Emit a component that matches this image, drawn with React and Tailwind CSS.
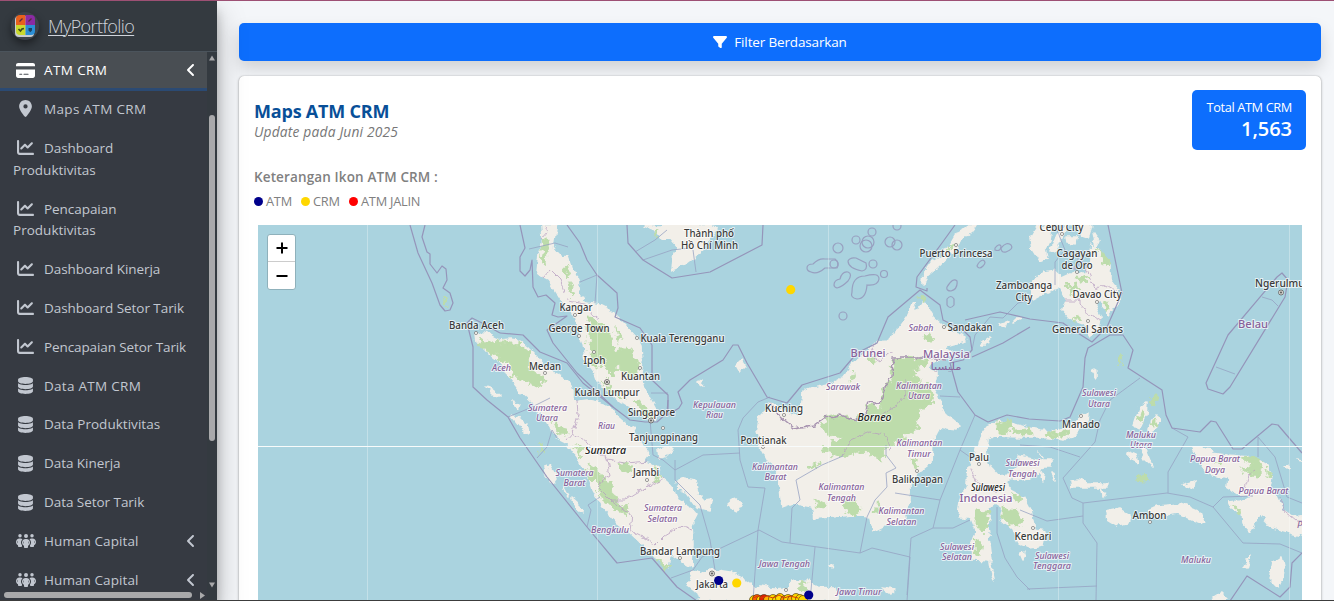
import React from "react";
import {
  FaFilter,
  FaCreditCard,
  FaLocationDot,
  FaChartLine,
  FaDatabase,
  FaPeopleGroup,
  FaAngleLeft,
} from "react-icons/fa6";

const menu = [
  { icon: FaLocationDot, label: "Maps ATM CRM", track: "tracking-[0.33px]" },
  { icon: FaChartLine, label: "Dashboard", more: "Produktivitas" },
  { icon: FaChartLine, label: "Pencapaian", more: "Produktivitas" },
  { icon: FaChartLine, label: "Dashboard Kinerja" },
  { icon: FaChartLine, label: "Dashboard Setor Tarik" },
  { icon: FaChartLine, label: "Pencapaian Setor Tarik", track: "tracking-[-0.1px]" },
  { icon: FaDatabase, label: "Data ATM CRM", track: "tracking-[0.28px]" },
  { icon: FaDatabase, label: "Data Produktivitas", track: "tracking-[0.03px]" },
  { icon: FaDatabase, label: "Data Kinerja" },
  { icon: FaDatabase, label: "Data Setor Tarik" },
  { icon: FaPeopleGroup, label: "Human Capital", arrow: true, track: "tracking-[0.08px]" },
  { icon: FaPeopleGroup, label: "Human Capital", arrow: true, track: "tracking-[0.08px]" },
];

function Logo() {
  return (
    <div className="flex h-7 w-7 items-center justify-center rounded-full bg-[#3d434a] shadow-[0_4px_8px_rgba(0,0,0,0.45)]">
      <svg width="20" height="22" viewBox="0 0 20 22">
        <rect x="0" y="1" width="19" height="21" rx="4" fill="#c9cdd0" />
        <path d="M5 0h5.500v10H1V4a4 4 0 0 1 4-4z" fill="#e8601c" />
        <path d="M10.500 0H16a4 4 0 0 1 4 4v6h-9.500z" fill="#8b2aa3" />
        <path d="M1 10h9.500v10H5a4 4 0 0 1-4-4z" fill="#c9d92e" />
        <path d="M10.500 10H20v6a4 4 0 0 1-4 4h-5.500z" fill="#2b8fd6" />
        <path d="M4.500 6.500l3-3M13.500 6.500l3-3" stroke="#5a2a3a" strokeWidth="1.300" />
        <path d="M3.500 14l2 2 1.500-2 2-.5" stroke="#3c4a1c" strokeWidth="1.600" fill="none" />
        <path d="M13.500 13h3.500v2.500l-1.700 1.800-1.800-1.800z" fill="#1d4260" />
      </svg>
    </div>
  );
}

function Sidebar() {
  return (
    <aside className="relative z-10 flex h-full w-[217px] shrink-0 flex-col overflow-visible bg-[#343a40] text-[#c2c7d0] shadow-[0_14px_28px_rgba(0,0,0,0.25),0_10px_10px_rgba(0,0,0,0.22)]">
      <div className="flex h-[51px] shrink-0 items-center gap-[9px] border-b border-[#4b545c] pl-[11px]">
        <Logo />
        <span className="pt-px text-[18px] font-light tracking-[-0.58px] text-[#d0d4db] underline decoration-1 underline-offset-2">MyPortfolio</span>
      </div>
      <div className="flex min-h-0 flex-1">
        <nav className="w-[207px] overflow-hidden bg-[#363a42] text-[13.500px] tracking-[-0.05px]">
          <div className="flex h-[39px] items-center border-b-[3px] border-[#2b4a73] bg-[#494e53] text-white">
            <FaCreditCard className="ml-4 h-[19px] w-[19px]" />
            <span className="ml-[9px] font-medium tracking-[0.38px]">ATM CRM</span>
            <FaAngleLeft className="ml-auto mr-[8px] h-4 w-4" />
          </div>
          <ul className="whitespace-nowrap">
            {menu.map((m, i) => (
              <li key={i} className="pb-[9.140px] pl-[13px] pt-[8.170px] leading-[21.600px]">
                <div className="flex h-[21.600px] items-center">
                  <span className="flex w-[25px] justify-center">
                    <m.icon className={m.icon === FaPeopleGroup ? "-mt-[2px] h-5 w-5" : "-mt-[2px] h-[17px] w-[17px]"} />
                  </span>
                  <span className={`ml-[6px] ${m.track || ""}`}>{m.label}</span>
                  {m.arrow && <FaAngleLeft className="-mt-[2px] ml-auto mr-[8px] h-4 w-4" />}
                </div>
                {m.more && <div className="h-[21.600px] tracking-[0.02px]">{m.more}</div>}
              </li>
            ))}
          </ul>
        </nav>
        <div className="flex w-[10px] flex-col items-center bg-[#343a40] pt-[3px]">
          <svg width="6" height="6" viewBox="0 0 6 6"><path d="M0 5.500L3 .5l3 5z" fill="#a9a9ab" /></svg>
          <div className="mt-[54px] h-[326px] w-[6px] rounded-full bg-[#a9a9ab]" />
          <svg className="mt-[141px]" width="6" height="6" viewBox="0 0 6 6"><path d="M0 .5L3 5.500l3-5z" fill="#a9a9ab" /></svg>
        </div>
      </div>
      <div className="absolute bottom-0 left-0 flex h-[10px] w-[217px] items-center pl-1">
        <div className="h-[6px] w-[188px] rounded-full bg-[#a9a9ab]" />
        <svg className="ml-[8px]" width="5" height="7" viewBox="0 0 5 7"><path d="M0 0l5 3.500L0 7z" fill="#a9a9ab" /></svg>
      </div>
    </aside>
  );
}

const land = [
  // Malay peninsula
  "541,225 542,240 539,253 537,273 542,277 548,280 553,287 558,295 563,303 568,310 575,317 578,330 583,343 585,360 593,370 597,380 610,393 622,402 640,413 650,420 658,418 657,410 650,397 643,387 641,374 643,360 642,347 637,338 623,323 610,310 600,305 585,303 580,293 578,280 572,267 568,256 562,257 558,253 553,247 555,233 557,225",
  // Sumatra
  "476,334 484,332 500,340 510,339 517,340 528,348 537,357 550,372 562,377 570,383 573,392 573,402 587,400 597,402 605,404 610,407 613,413 620,418 626,423 634,428 637,436 643,444 648,455 643,462 652,464 659,468 661,477 668,482 673,488 678,500 690,507 697,515 692,525 693,543 692,567 683,562 670,553 668,568 657,558 643,545 630,533 617,523 603,507 593,490 587,473 577,457 567,443 557,438 550,427 540,412 533,403 520,391 510,378 502,363 485,350 477,341",
  // Borneo
  "913,304 916,312 920,305 923,302 927,307 933,317 940,323 947,330 957,333 966,337 965,342 953,345 943,348 952,354 948,359 932,362 927,369 937,372 937,380 932,387 937,395 942,410 950,418 960,426 957,430 948,429 940,427 933,440 932,463 920,472 910,483 910,500 905,513 907,523 887,525 873,532 871,517 853,515 833,517 815,518 812,507 793,503 782,507 780,487 777,467 767,460 760,447 757,430 760,417 765,410 770,402 776,405 785,413 798,417 802,402 803,392 813,388 827,385 843,377 853,363 867,353 875,343 888,342 892,333 900,327 907,317",
  // Java
  "688,585 693,570 701,574 710,570 730,573 740,577 748,582 753,587 760,586 774,588 788,587 792,580 799,581 807,580 812,586 835,587 838,601 700,601 697,592",
  // Sulawesi
  "980,437 987,427 1000,421 1010,423 1029,428 1040,430 1057,431 1070,427 1080,415 1088,413 1087,423 1077,433 1063,440 1040,437 1020,437 993,436 987,441 986,450 990,467 997,475 1010,474 1020,464 1020,455 1040,460 1052,460 1052,467 1043,467 1037,475 1020,480 1006,481 1010,490 1023,497 1030,510 1034,530 1045,532 1043,546 1030,548 1018,543 1012,530 1000,520 1003,508 995,503 990,507 988,527 992,561 973,560 972,543 975,530 970,518 958,518 960,500 967,483 968,467 975,457",
  // Halmahera
  "1134,425 1140,407 1147,402 1146,416 1140,428",
  "1150,425 1156,415 1160,420 1155,429 1149,433 1148,429",
  "1139,446 1146,450 1153,467 1145,460",
  "1128,452 1136,455 1139,463 1128,458",
  // Sula, Buru, Seram
  "1071,481 1078,480 1087,483 1108,483 1107,487 1072,487",
  "1102,488 1106,495 1103,497",
  "1106,512 1120,509 1130,515 1128,523 1117,525 1107,519",
  "1148,510 1157,506 1180,504 1191,508 1200,512 1204,524 1193,520 1177,513 1160,516 1151,514",
  // Papua
  "1193,448 1213,450 1210,453 1227,455 1253,457 1267,465 1272,477 1270,487 1277,497 1283,510 1293,517 1306,515 1306,537 1287,532 1270,527 1260,513 1257,520 1250,531 1243,523 1242,513 1230,507 1228,502 1240,501 1253,497 1237,493 1227,487 1228,479 1207,473 1202,465",
  "1182,485 1195,481 1194,488",
  "1270,580 1273,563 1282,557 1284,567 1283,577 1278,588",
  "1244,566 1251,555 1247,568",
  "1214,597 1222,592 1227,597 1223,601 1212,601",
  // Mindanao and neighbours
  "1092,245 1102,253 1110,265 1110,280 1118,290 1118,302 1108,315 1102,300 1093,303 1100,317 1098,330 1090,335 1083,323 1070,318 1063,310 1067,300 1060,287 1047,292 1032,300 1033,283 1043,272 1055,270 1062,278 1073,273 1087,273 1090,260",
  "1030,238 1037,226 1052,225 1050,240 1045,250 1047,258 1040,261 1032,248",
  "1050,252 1057,235 1066,226 1063,236 1055,250",
  "1066,237 1077,237 1075,244 1067,243",
  "1079,225 1092,225 1088,238 1082,236",
  "1093,232 1099,240 1096,247",
  "923,284 924,272 931,262 940,257 950,245 957,233 970,225 977,225 973,231 963,238 953,253 937,268 928,275",
  // Mekong delta
  "643,225 712,225 716,230 708,241 700,253 687,263 672,270 673,258 677,247 670,238 661,239 655,230",
  // Small islands
  "512,417 520,418 527,425 529,434 520,427",
  "544,467 549,465 556,478 552,483 546,476",
  "563,487 568,496",
  "571,497 578,503 582,513 576,509",
  "486,388 492,390 500,396 493,395",
  "513,401 520,404 518,409",
  "677,480 685,478 695,480 698,494 704,500 711,499 709,510 697,507 686,492 679,490",
  "727,503 733,498 742,504 737,512 731,509",
  "658,450 672,446 666,458 659,459",
  "736,365 741,360 745,367 740,372",
  "698,383 703,380 702,386",
  "990,562 992,575 994,580",
  "1020,553 1025,552 1023,560",
  "1092,370 1097,373 1097,377",
  "1039,452 1044,458",
  "1040,471 1045,473 1044,480",
  "1050,472 1054,474 1055,481",
  "882,588 895,590 890,594",
  "1000,324 1008,321 1006,327",
  "1013,322 1017,318 1022,318",
  "980,345 990,338 987,345",
  "1284,466 1288,464 1288,470",
  "1297,460 1302,461",
  "830,565 833,565 832,567",
];

const green = [
  "893,358 907,357 927,360 928,366 913,370 915,377 930,387 934,395 930,404 920,413 917,430 905,437 897,443 884,448 883,463 870,453 855,452 843,458 820,450 843,438 828,434 820,427 827,418 840,416 857,420 865,413 868,403 880,407 885,387 892,377",
  "478,337 490,343 503,342 520,344 530,353 527,362 535,372 546,378 538,388 525,382 515,377 508,364 495,354 483,349",
  "588,463 597,468 601,480 612,482 613,497 625,506 628,514 613,508 603,500 598,486 590,478",
  "543,238 549,242 547,262 541,266",
  "566,262 571,275 568,278 564,268",
  "568,282 575,293 572,298",
  "588,315 598,320 612,332 610,342 618,353 607,357 600,368 590,360 588,340",
  "607,352 630,348 638,360 640,372 628,376 617,366 613,378 605,370",
  "633,400 645,405 655,417 646,416",
  "600,380 615,390 624,398 617,398",
  "615,325 622,340 617,344",
  "620,462 631,466 633,473 622,469",
  "551,420 565,428 566,436 556,430",
  "574,445 583,450 580,456",
  "655,467 663,478 655,483",
  "998,422 1009,420 1012,427 1008,433 998,432",
  "1013,429 1030,428 1033,435 1014,433",
  "1047,433 1072,430 1062,438 1052,439",
  "1002,508 1016,510 1024,522 1016,526 1002,518",
  "1012,492 1022,497 1021,505 1014,500",
  "975,511 988,510 988,526 982,533 975,524",
  "975,540 982,543 980,556 975,553",
  "1241,460 1252,456 1262,463 1260,476 1244,474 1242,468 1253,465",
  "1264,467 1273,475 1270,477",
  "1217,463 1222,462 1220,467",
  "1134,477 1142,474 1150,480 1143,481 1134,480",
  "1150,401 1152,394 1159,394 1159,401 1154,405",
  "1136,420 1140,412 1145,410 1142,423",
  "1150,424 1157,418 1157,426",
  "842,503 855,500 861,508 856,515 845,512",
  "815,500 827,503 826,508 817,507",
  "808,467 818,462 816,471",
  "872,510 880,503 878,517",
  "853,373 857,376 850,381",
  "868,358 878,357 874,364",
  "925,332 934,337 928,341 923,338",
  "1098,248 1107,258 1110,267 1104,264",
  "1067,285 1076,283 1078,290 1070,292",
  "1078,277 1090,279 1083,284",
  "1073,316 1083,320 1078,323",
  "1105,305 1110,303 1108,312",
  "949,248 955,243 950,251",
  "655,230 660,229 657,239",
  "1118,358 1121,353 1122,360 1120,366",
  "443,300 447,297 448,305",
  "1231,505 1240,510 1236,511",
  "795,585 808,583 804,590",
  "658,560 668,566 666,569",
  "919,297 926,299 922,301",
  "540,444 543,450 539,456",
  "912,460 917,462 916,470",
];

const borders = [
  "410,225 418,253 432,283 440,305 445,311 450,310 453,303 450,293 443,288 447,280 446,269 442,266 437,273 430,264 430,254 427,252 422,237 425,225",
  "500,333 482,323 472,318 467,323 473,347 473,387 487,400 508,417 520,438 547,477 587,527 617,563 652,558 677,587 697,601",
  "500,333 523,335 540,352 567,363 583,383 613,407 630,420 645,422 657,422 667,413 668,400",
  "520,225 525,248 520,257 520,271 525,276 530,270 532,260 533,287 538,297 546,295 555,303 552,315 558,317 567,316 547,330 553,343 577,373 613,407",
  "567,225 580,243 587,260 597,275 617,293 618,308 615,317 640,328 652,345 652,380 668,395 668,415 679,408 682,403 678,392 690,380 723,360 733,345 738,345 747,363 767,397 787,403 802,385 840,373 857,353 877,343 888,317 920,290 940,305 943,320 963,330 970,337 972,350 963,360 950,363 958,392 975,415 988,422 1007,415 1029,419 1060,421 1070,417 1083,387 1085,358 1088,348 1110,335 1123,335 1133,350 1128,368 1162,390 1166,415 1172,428 1200,432 1211,421 1216,422 1233,449 1242,449 1272,424 1278,425 1302,453",
  "627,225 628,243 643,260 672,278 710,272 762,245 763,225",
  "955,225 942,243 917,277 916,287 927,291 927,288",
  "972,357 1003,343 1030,327",
  "965,320 1000,312 1030,319 1063,323 1073,330 1092,342 1107,327 1122,293 1108,225",
  "1277,277 1282,273 1288,280 1285,297 1230,387 1223,394 1208,389 1206,383 1228,335 1277,277",
  "1302,553 1292,563 1290,587 1280,597 1247,576 1230,601",
];

const thinBorders = [
  "508,417 530,408 550,398",
  "537,458 547,447 552,430 557,438",
  "587,527 591,510 588,505 600,497",
  "650,420 653,455 663,460 675,470 703,455 740,453",
  "675,460 675,480 700,505 710,540 715,570",
  "671,578 693,570 702,557 759,530 782,542 860,553 872,548 910,557 907,601",
  "907,595 911,538 933,528 940,500 960,450 975,415",
  "895,493 940,500",
  "933,528 953,528 970,520",
  "860,553 867,517 875,500 887,487 886,473 896,468 886,455 886,445",
  "790,543 792,508 800,500 796,480 822,465 843,456",
  "770,397 758,402 743,418 738,430 740,460 748,487 765,488 758,530 753,601",
  "815,547 810,601",
  "997,507 997,533 1005,558 1017,577 1030,590",
  "1140,378 1110,400 1100,420 1095,442 1063,478 1072,498 1083,503 1083,523 1097,543 1096,601",
  "1083,503 1167,493 1190,497 1213,507 1243,543 1280,544 1302,553",
  "1168,493 1168,472 1188,437 1172,428",
  "1258,437 1275,457 1287,497 1302,503",
  "1258,437 1258,457",
  "1213,507 1223,497 1253,496",
  "1027,589 1097,586",
  "1020,510 1047,521 1083,516",
  "960,450 970,457 978,457",
  "1020,445 1050,447 1080,457",
  "635,252 655,240 667,230",
  "643,260 672,250 690,248",
  "693,250 696,272",
  "597,275 580,282",
  "597,275 595,303",
  "529,249 555,243 568,247",
  "1262,297 1272,300 1278,306",
  "1216,367 1235,374",
  "972,350 975,335 990,317 1003,318 1018,303 1030,300",
  "1055,225 1065,250 1055,262 1055,285",
  "960,397 940,396",
  "651,393 668,393",
];

const provinces = [
  "577,400 578,415 573,433 567,440",
  "573,433 590,445 607,460 625,463 648,461",
  "607,460 610,475 602,480 597,487 610,500 625,500 636,493 655,483 665,478",
  "610,500 632,515 630,530 640,535 655,545 665,535 680,526 692,530",
  "843,456 850,440 870,432 885,435 890,450",
  "880,415 895,407 905,395 905,380",
  "970,467 978,483 990,490 1003,490",
  "543,278 550,270 560,280 565,292",
  "567,300 585,303 592,315 600,320",
  "1075,270 1080,258 1090,275 1095,290 1105,285 1118,292",
  "1066,300 1080,300 1085,312 1100,320",
  "1245,488 1248,475 1255,470",
  "1280,498 1285,512 1295,520 1302,520",
  "875,343 870,355 880,362 888,353 893,352",
  "541,240 548,232 545,225",
];

const reefs = [
  [838, 248, 5], [856, 240, 4], [868, 242, 6], [866, 246, 6], [897, 226, 4], [890, 242, 5], [897, 245, 5], [873, 264, 4],
  [884, 274, 3.500], [843, 316, 4], [872, 232, 4], [834, 264, 4],
];
const reefShapes = [
  "M807 268q0-4 6-4q6-6 12-5h10q5 4 2 9q-8 0-12 0q-8 7-14 4q-4-1-4-4z",
  "M848 261q2-4 8-3l10 5q2 7-4 8q-14-3-14-10z",
  "M834 285q0-5 6-6q2-8 8-7q5 2 0 9q-6 6-11 7q-3-1-3-3z",
  "M852 292q0-16 13-16q14-4 14 3q-1 7-12 6q-1 14-10 14q-7-1-5-7z",
  "M995 248q4-5 6-2q0 6-6 4zM947 287q6-10 10-6q1 8-6 10q-5 0-4-4z",
  "M977 266q2-5 6-6q4 2 0 6q-4 4-6 0z",
  "M947 299q4-5 7 0v6q-4 5-7 0zM1001 248q6-7 10-3q3 4-5 7q-5 1-5-4z",
];

// text, centre x, baseline y, drawn width
const cities = [
  ["Thành phố", 709, 236.500, 50], ["Hồ Chí Minh", 709.500, 248.500, 57],
  ["Kangar", 576, 311, 33], ["George Town", 579, 332, 61], ["Kuala Terengganu", 682.500, 341.500, 84],
  ["Banda Aceh", 476.500, 329, 55], ["Medan", 545, 370, 32], ["Ipoh", 594.500, 363.500, 22],
  ["Kuantan", 640.500, 380, 39], ["Kuala Lumpur", 607, 395.500, 65], ["Singapore", 651.500, 415.500, 47],
  ["Tanjungpinang", 663.500, 441, 69], ["Jambi", 646, 476, 26], ["Bandar Lampung", 680, 555, 80],
  ["Jakarta", 712, 588, 32], ["Kuching", 784, 411.500, 38], ["Pontianak", 763.500, 444, 46],
  ["Balikpapan", 917.500, 483, 51], ["Palu", 979, 461, 20], ["Puerto Princesa", 956, 256.500, 73],
  ["Sandakan", 970, 331, 45], ["Zamboanga", 1024, 289, 56], ["City", 1024, 301, 17],
  ["Cebu City", 1061.500, 231, 44], ["Cagayan", 1077, 256.500, 41], ["de Oro", 1077, 268.500, 31],
  ["Davao City", 1097, 298, 49], ["General Santos", 1087.500, 332.500, 71],
  ["Manado", 1081, 428, 38], ["Kendari", 1033, 539.500, 37], ["Ambon", 1149.500, 518.500, 34],
];

const regions = [
  ["Aceh", 501.500, 371, 19], ["Sumatera", 547.500, 410.500, 39], ["Utara", 547, 421, 22],
  ["Riau", 606.500, 429, 17], ["Kepulauan", 714.500, 407.500, 43], ["Riau", 714.500, 418, 17],
  ["Sumatera", 574.500, 475.500, 38], ["Barat", 574.500, 486, 22], ["Sumatera", 663, 511, 38],
  ["Selatan", 662.500, 521.500, 30], ["Bengkulu", 610, 532.500, 38], ["Sarawak", 843, 389.500, 34],
  ["Sabah", 921, 331, 25], ["Kalimantan", 919, 388.500, 46], ["Utara", 919, 399, 22],
  ["Kalimantan", 919.500, 446, 46], ["Timur", 919, 456.500, 24], ["Kalimantan", 775, 469.500, 46],
  ["Barat", 775.500, 480, 22], ["Kalimantan", 841.500, 490, 46], ["Tengah", 841.500, 500.500, 29],
  ["Kalimantan", 901.500, 514, 46], ["Selatan", 901.500, 524.500, 30], ["Jawa Tengah", 784.500, 567, 51],
  ["Jawa Timur", 859, 594.500, 45], ["Sulawesi", 957, 549.500, 34], ["Selatan", 957, 560, 30],
  ["Sulawesi", 1022.500, 466, 34], ["Tengah", 1022.500, 476.500, 29], ["Sulawesi", 1099, 396, 34],
  ["Utara", 1099, 406.500, 22], ["Sulawesi", 1052, 558.500, 34], ["Tenggara", 1052, 569, 38],
  ["Maluku", 1141, 437.500, 30], ["Utara", 1141, 448, 22], ["Papua Barat", 1215, 462, 50],
  ["Daya", 1215, 473, 20], ["Papua Barat", 1263.500, 494, 50], ["Maluku", 1196, 562.500, 30],
];

const countries = [
  ["Brunei", 868, 356.500, 35], ["Malaysia", 946.500, 357.500, 47], ["Indonesia", 986, 502, 53], ["Belau", 1253, 327.500, 30],
];

const towns = [
  [476, 333], [575, 315], [579, 336], [594, 352], [637, 338], [640, 368], [545, 373], [663, 428], [647, 480],
  [680, 558], [784, 415], [763, 447], [917, 471], [979, 464], [956, 245], [944, 327], [1062, 234], [1077, 272],
  [1097, 302], [1088, 321], [1081, 416], [1150, 522], [1033, 528], [786, 590],
];

const cluster = [
  [754, 600, "#ffd700"], [757, 599, "#ff5a00"], [761, 600, "#ffd700"], [764, 599, "#e02000"], [768, 600, "#ffb000"],
  [773, 599, "#ffd700"], [777, 600, "#ffd700"], [780, 598, "#ffd700"], [785, 600, "#ff8c00"], [788, 599, "#ffd700"],
  [792, 600, "#ffb000"], [796, 598, "#ffd700"], [800, 599, "#ffd700"], [803, 600, "#ffd700"],
];

function Labels({ items, ...rest }) {
  return (
    <g textAnchor="middle" paintOrder="stroke" stroke="#fff" strokeOpacity="0.7" strokeWidth="2" strokeLinejoin="round" {...rest}>
      {items.map(([t, x, y, w], i) => (
        <text key={i} x={x} y={y} textLength={w} lengthAdjust="spacingAndGlyphs">{t}</text>
      ))}
    </g>
  );
}

function MapCanvas() {
  return (
    <svg className="block h-[376px] w-[1044px] bg-[#aad3df] [font-family:'Noto_Sans',sans-serif]" viewBox="258 225 1044 376">
      <defs>
        <filter id="coast" filterUnits="userSpaceOnUse" x="250" y="215" width="1060" height="396">
          <feTurbulence type="fractalNoise" baseFrequency="0.13" numOctaves="3" seed="7" />
          <feDisplacementMap in="SourceGraphic" scale="7" xChannelSelector="R" yChannelSelector="G" />
        </filter>
        <filter id="forest" filterUnits="userSpaceOnUse" x="250" y="215" width="1060" height="396">
          <feTurbulence type="fractalNoise" baseFrequency="0.16" numOctaves="3" seed="3" />
          <feDisplacementMap in="SourceGraphic" scale="12" xChannelSelector="R" yChannelSelector="G" />
        </filter>
      </defs>
      <g fill="#f2efe9" stroke="#f2efe9" strokeWidth="1.600" strokeLinejoin="round" filter="url(#coast)">
        {land.map((p, i) => <polygon key={i} points={p} />)}
      </g>
      <g fill="#bddcab" stroke="#bddcab" strokeWidth="0.800" strokeLinejoin="round" filter="url(#forest)">
        {green.map((p, i) => <polygon key={i} points={p} />)}
      </g>
      <g fill="none" stroke="#b59bc0" strokeWidth="0.900" strokeLinejoin="round" opacity="0.8" filter="url(#coast)">
        {provinces.map((p, i) => <polyline key={i} points={p} />)}
      </g>
      <polyline
        points="770,402 780,417 793,428 815,425 825,418 840,415 857,420 865,413 868,403 880,405 885,387 892,377 893,358 927,358 945,360"
        fill="none"
        stroke="#a793b0"
        strokeWidth="1.400"
        filter="url(#coast)"
      />
      <g fill="none" stroke="#95a0c2" strokeWidth="0.900" strokeLinejoin="round" opacity="0.85">
        {thinBorders.map((p, i) => <polyline key={i} points={p} />)}
      </g>
      <g fill="none" stroke="#9595ba" strokeWidth="1.200" strokeLinejoin="round">
        {borders.map((p, i) => <polyline key={i} points={p} />)}
      </g>
      <g fill="none" stroke="#98a0c0" strokeWidth="1.200">
        {reefs.map(([x, y, r], i) => <circle key={i} cx={x} cy={y} r={r} />)}
        {reefShapes.map((d, i) => <path key={i} d={d} />)}
      </g>
      <path d="M367.500 225v376M597.500 225v376M828.500 225v376M1058.500 225v376M1289.500 225v376" stroke="#fff" strokeOpacity="0.3" />
      <g fill="#f4f2ee" stroke="#777" strokeWidth="0.700">
        {towns.map(([x, y], i) => <circle key={i} cx={x} cy={y} r="1.600" />)}
      </g>
      {[[607, 382], [651, 420.500], [712, 573.500], [1281, 292.500]].map(([x, y]) => (
        <g key={x} stroke="#555" strokeWidth="0.800">
          <circle cx={x} cy={y} r="2.500" fill="#f2efe9" />
          <circle cx={x} cy={y} r="0.800" fill="#555" />
        </g>
      ))}
      <Labels items={regions} fontSize="9.600" fontStyle="italic" fontWeight="500" fill="#86619a" />
      <Labels items={countries} fontSize="11.200" fontWeight="500" fill="#87629a" />
      <text x="946" y="370" textAnchor="middle" fontSize="10" fill="#87629a" className="[font-family:'DejaVu_Sans',sans-serif]" textLength="31" lengthAdjust="spacingAndGlyphs">مليسيا</text>
      <Labels items={cities} fontSize="10.600" fontWeight="500" fill="#3a3a3a" />
      <Labels items={[["Sumatra", 605.500, 453.500, 41], ["Borneo", 874.500, 421, 34], ["Sulawesi", 988, 490.500, 34]]} fontSize="10.300" fontStyle="italic" fontWeight="500" fill="#222" />
      <text x="1255" y="287" fontSize="10.200" fontWeight="500" fill="#3a3a3a" paintOrder="stroke" stroke="#fff" strokeOpacity="0.7" strokeWidth="2">Ngerulmud</text>
      <text x="1297" y="528" fontSize="9.600" fontStyle="italic" fill="#86619a">Papua</text>
      <path d="M258 446.500h1044" stroke="#f8fbfb" />
      <circle cx="790.700" cy="289.700" r="4.600" fill="#ffd700" />
      <circle cx="718.700" cy="580.500" r="4.600" fill="#00008b" />
      <circle cx="736.700" cy="583" r="4.600" fill="#ffd700" />
      <g stroke="#3a2a10" strokeWidth="0.600">
        {cluster.map(([x, y, c]) => <circle key={x} cx={x} cy={y} r="4.500" fill={c} />)}
      </g>
      <path d="M753 598l5-2 4 2 5-2 6 2 6-3 5 3 6-2 8 2" stroke="#d83a00" strokeWidth="1" fill="none" />
      <circle cx="808.700" cy="595" r="4.600" fill="#00008b" />
    </svg>
  );
}

function Legend({ dot, label, width }) {
  return (
    <span className={`flex items-center gap-[3px] whitespace-nowrap ${width}`}>
      <span className={`h-[9px] w-[9px] shrink-0 rounded-full ${dot}`} />
      {label}
    </span>
  );
}

export default function App() {
  return (
    <div className="flex h-[601px] w-[1334px] flex-col overflow-hidden border-b border-t border-b-[#3c3c3c] border-t-[#9d5074] bg-[#f4f6f9] [font-family:'Open_Sans','Noto_Sans',sans-serif]">
      <div className="flex min-h-0 flex-1">
        <Sidebar />
        <main className="min-w-0 flex-1 overflow-hidden pl-[22px] pr-[13px] pt-[22px]">
          <button className="flex h-[38px] w-full items-center justify-center gap-[7px] rounded-[5px] bg-[#0d6efd] text-[13.500px] tracking-[-0.15px] text-white shadow-[0_8px_16px_rgba(0,0,0,0.15)]">
            <FaFilter className="h-[14px] w-[14px]" />
            <span className="pt-px">Filter Berdasarkan</span>
          </button>
          <section className="mt-[15px] h-[600px] rounded-[5px] bg-white px-[15px] pt-[14px] shadow-[0_0_1px_rgba(0,0,0,0.3),0_1px_3px_rgba(0,0,0,0.35)]">
            <div className="flex h-[60px] items-start justify-between">
              <div className="pt-[10px]">
                <h1 className="text-[18px] font-bold leading-[22px] tracking-[-0.2px] text-[#084f98]">Maps ATM CRM</h1>
                <p className="pt-px text-[13.800px] italic leading-[17px] tracking-[0.18px] text-[#777]">Update pada Juni 2025</p>
              </div>
              <div className="flex h-[60px] w-[114px] flex-col items-end rounded-[5px] bg-[#0d6efd] pr-[14px] pt-[8px] text-white">
                <span className="whitespace-nowrap text-[12.800px] leading-[19px] tracking-[-0.38px]">Total ATM CRM</span>
                <span className="text-[20px] font-semibold leading-[24px] tracking-[-0.05px]">1,563</span>
              </div>
            </div>
            <h2 className="mt-[17px] text-[13.500px] font-semibold leading-5 tracking-[0.13px] text-[#808080]">Keterangan Ikon ATM CRM :</h2>
            <div className="mt-[6px] flex h-[17px] text-[12.800px] tracking-[-0.25px] text-[#808080]">
              <Legend dot="bg-[#00008b]" label="ATM" width="w-[47px]" />
              <Legend dot="bg-[#ffd700]" label="CRM" width="w-[48px]" />
              <Legend dot="bg-[#ff0000]" label="ATM JALIN" width="w-[80px]" />
            </div>
            <div className="relative ml-[4px] mt-[15px] w-[1044px]">
              <MapCanvas />
              <div className="absolute left-[9px] top-[9px] flex h-[56px] w-[29px] flex-col overflow-hidden rounded-[3px] border border-[#8fb1bb] bg-white text-black">
                <button className="flex h-[27px] items-center justify-center border-b border-[#ccc]">
                  <svg width="12" height="12"><path d="M6 .5v11M.5 6h11" stroke="#000" strokeWidth="2" /></svg>
                </button>
                <button className="flex h-[27px] items-center justify-center">
                  <svg width="12" height="12"><path d="M.5 6h11" stroke="#000" strokeWidth="2" /></svg>
                </button>
              </div>
            </div>
          </section>
        </main>
      </div>
    </div>
  );
}
